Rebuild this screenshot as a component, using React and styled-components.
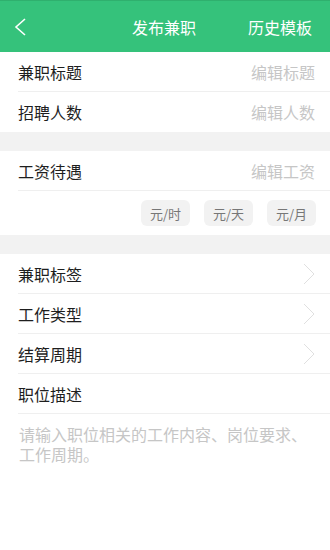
import React from 'react';
import styled, { createGlobalStyle } from 'styled-components';

const GlobalStyle = createGlobalStyle`
  html, body {
    margin: 0;
    padding: 0;
    background: #fff;
    font-family: "Noto Sans CJK SC", "Noto Sans", sans-serif;
  }
`;

const Page = styled.div`
  width: 330px;
  height: 550px;
  display: flex;
  flex-direction: column;
  background: #fff;
  overflow: hidden;
`;

const Header = styled.div`
  height: 52px;
  flex-shrink: 0;
  background: #35c27b;
  border-top: 1px solid #2fb06e;
  box-sizing: border-box;
  display: grid;
  grid-template-columns: 1fr auto 1fr;
  align-items: center;
  color: #fff;
  font-size: 16px;
  padding: 0 18px 0 14px;
`;

const Back = styled.div`
  display: flex;
  align-items: center;
`;

const Title = styled.div`
  padding-left: 2px;
`;

const Action = styled.div`
  justify-self: end;
`;

const Group = styled.div`
  display: flex;
  flex-direction: column;
  padding-left: 18px;
`;

const Row = styled.div`
  height: 40px;
  box-sizing: border-box;
  display: flex;
  align-items: center;
  justify-content: space-between;
  padding-right: 15px;
  border-bottom: ${p => (p.$last ? 'none' : '1px solid #efefef')};
  font-size: 16px;
  color: #1e1e1e;
`;

const Hint = styled.span`
  color: #c6c6c6;
`;

const Gap = styled.div`
  height: 19px;
  background: #f2f2f2;
`;

const Units = styled.div`
  height: 44px;
  display: flex;
  align-items: center;
  justify-content: flex-end;
  gap: 14px;
  padding-right: 14px;
`;

const Chip = styled.div`
  width: 49px;
  height: 26px;
  border-radius: 6px;
  background: #f2f2f2;
  color: #777;
  font-size: 13px;
  display: flex;
  align-items: center;
  justify-content: center;
`;

const Desc = styled.div`
  padding: 10px 18px 0 19px;
  font-size: 16px;
  line-height: 20px;
  color: #c6c6c6;
`;

const Chevron = () => (
  <svg width="12" height="22" viewBox="0 0 12 22">
    <path d="M1 1 L11 11 L1 21" fill="none" stroke="#e0e0e0" strokeWidth="1" />
  </svg>
);

export default function App() {
  return (
    <Page>
      <GlobalStyle />
      <Header>
        <Back>
          <svg width="13" height="18" viewBox="0 0 13 18">
            <path d="M11 1 L2 9 L11 17" fill="none" stroke="#fff" strokeWidth="1.6" />
          </svg>
        </Back>
        <Title>发布兼职</Title>
        <Action>历史模板</Action>
      </Header>

      <Group>
        <Row>兼职标题<Hint>编辑标题</Hint></Row>
        <Row $last>招聘人数<Hint>编辑人数</Hint></Row>
      </Group>
      <Gap />
      <Group>
        <Row>工资待遇<Hint>编辑工资</Hint></Row>
        <Units>
          <Chip>元/时</Chip>
          <Chip>元/天</Chip>
          <Chip>元/月</Chip>
        </Units>
      </Group>
      <Gap />
      <Group>
        <Row>兼职标签<Chevron /></Row>
        <Row>工作类型<Chevron /></Row>
        <Row>结算周期<Chevron /></Row>
        <Row>职位描述</Row>
      </Group>
      <Desc>请输入职位相关的工作内容、岗位要求、工作周期。</Desc>
    </Page>
  );
}
